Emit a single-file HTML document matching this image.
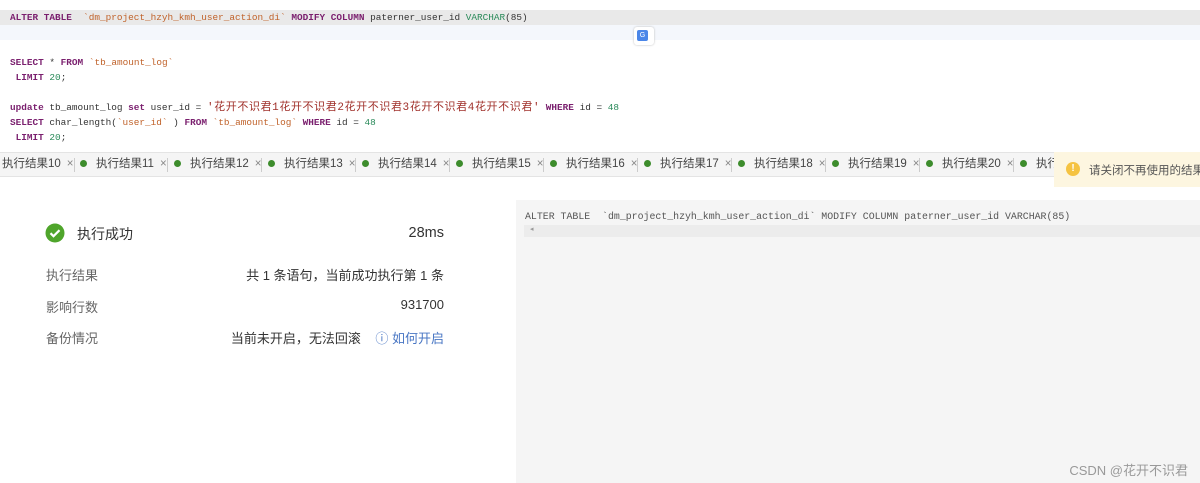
<!DOCTYPE html>
<html><head><meta charset="utf-8"><style>
body{margin:0;width:1200px;height:483px;background:#fff;position:relative;overflow:hidden;font-family:"Liberation Sans","Noto Sans CJK SC",sans-serif}
.code{position:absolute;left:0;top:0;width:1200px;height:150px}
.ln{position:absolute;left:10px;font-family:"Liberation Mono","Noto Sans CJK SC",monospace;font-size:9.4px;color:#333;white-space:pre;line-height:15px}
.k{color:#7a1f6e;font-weight:bold}.s{color:#c0622a}.n{color:#2a8a5a}.c{color:#a0302a;font-size:11px;letter-spacing:0.6px}
.tabs{position:absolute;left:0;top:152px;width:1200px;height:23px;background:#f5f5f5;border-top:1px solid #e4e4e4;border-bottom:1px solid #e4e4e4}
.tab{position:absolute;top:0;height:23px;line-height:23px;font-size:11.5px;color:#444;white-space:nowrap}
.dot{display:inline-block;width:7px;height:7px;border-radius:50%;background:#3d8c2c;margin-right:9px;vertical-align:0}
.x{color:#888;margin-left:6px}
.sep{position:absolute;top:5px;width:1px;height:14px;background:#ccc}
.warn{position:absolute;left:1054px;top:152px;width:146px;height:35px;background:#fdf6e0;font-size:11.5px;color:#555}
.right{position:absolute;left:516px;top:200px;width:684px;height:283px;background:#f5f5f5}
.lbl{position:absolute;left:46px;font-size:13px;color:#666}
.val{position:absolute;right:756px;font-size:13px;color:#333;white-space:nowrap}
</style></head><body>
<div class="code">
<div style="position:absolute;left:0;top:10px;width:1200px;height:15px;background:#e9e9e9"></div>
<div style="position:absolute;left:0;top:25px;width:1200px;height:15px;background:#f4f7fc"></div>
<div style="position:absolute;left:634px;top:27px;width:20px;height:18px;background:#fff;border-radius:3px;box-shadow:0 0 2px #bbb"><div style="position:absolute;left:3px;top:3px;width:11px;height:11px;background:#4a86e8;border-radius:2px;color:#fff;font-size:7px;line-height:11px;text-align:center">G</div></div>
<div class="ln" style="top:10px"><span class="k">ALTER TABLE</span>  <span class="s">`dm_project_hzyh_kmh_user_action_di`</span> <span class="k">MODIFY COLUMN</span> paterner_user_id <span class="n">VARCHAR</span>(85)</div>
<div class="ln" style="top:55px"><span class="k">SELECT</span> * <span class="k">FROM</span> <span class="s">`tb_amount_log`</span></div>
<div class="ln" style="top:70px"> <span class="k">LIMIT</span> <span class="n">20</span>;</div>
<div class="ln" style="top:100px"><span class="k">update</span> tb_amount_log <span class="k">set</span> user_id = <span class="c">'花开不识君1花开不识君2花开不识君3花开不识君4花开不识君'</span> <span class="k">WHERE</span> id = <span class="n">48</span></div>
<div class="ln" style="top:115px"><span class="k">SELECT</span> char_length(<span class="s">`user_id`</span> ) <span class="k">FROM</span> <span class="s">`tb_amount_log`</span> <span class="k">WHERE</span> id = <span class="n">48</span></div>
<div class="ln" style="top:130px"> <span class="k">LIMIT</span> <span class="n">20</span>;</div>
</div>
<div class="tabs">
<div class="tab" style="left:2px">执行结果10<span class="x">×</span></div>
<div class="sep" style="left:74px"></div>
<div class="tab" style="left:80px"><span class="dot"></span>执行结果11<span class="x">×</span></div>
<div class="sep" style="left:167px"></div>
<div class="tab" style="left:174px"><span class="dot"></span>执行结果12<span class="x">×</span></div>
<div class="sep" style="left:261px"></div>
<div class="tab" style="left:268px"><span class="dot"></span>执行结果13<span class="x">×</span></div>
<div class="sep" style="left:355px"></div>
<div class="tab" style="left:362px"><span class="dot"></span>执行结果14<span class="x">×</span></div>
<div class="sep" style="left:449px"></div>
<div class="tab" style="left:456px"><span class="dot"></span>执行结果15<span class="x">×</span></div>
<div class="sep" style="left:543px"></div>
<div class="tab" style="left:550px"><span class="dot"></span>执行结果16<span class="x">×</span></div>
<div class="sep" style="left:637px"></div>
<div class="tab" style="left:644px"><span class="dot"></span>执行结果17<span class="x">×</span></div>
<div class="sep" style="left:731px"></div>
<div class="tab" style="left:738px"><span class="dot"></span>执行结果18<span class="x">×</span></div>
<div class="sep" style="left:825px"></div>
<div class="tab" style="left:832px"><span class="dot"></span>执行结果19<span class="x">×</span></div>
<div class="sep" style="left:919px"></div>
<div class="tab" style="left:926px"><span class="dot"></span>执行结果20<span class="x">×</span></div>
<div class="sep" style="left:1013px"></div>
<div class="tab" style="left:1020px"><span class="dot"></span>执行</div>
</div>
<div class="warn"><div style="position:absolute;left:12px;top:10px;width:14px;height:14px;border-radius:50%;background:#f5c342;color:#fff;font-size:10px;font-weight:bold;text-align:center;line-height:14px">!</div><div style="position:absolute;left:35px;top:10px;white-space:nowrap">请关闭不再使用的结果集</div></div>
<svg style="position:absolute;left:45px;top:223px" width="20" height="20"><circle cx="10" cy="10" r="9.5" fill="#4fa52b"/><path d="M5.5 10.2l3 3 6-6" stroke="#fff" stroke-width="2.2" fill="none"/></svg>
<div style="position:absolute;left:77px;top:224px;font-size:14px;color:#333">执行成功</div>
<div class="val" style="top:225px;font-size:14.5px">28ms</div>
<div class="lbl" style="top:265px">执行结果</div><div class="val" style="top:265px">共 1 条语句，当前成功执行第 1 条</div>
<div class="lbl" style="top:297px">影响行数</div><div class="val" style="top:297px">931700</div>
<div class="lbl" style="top:328px">备份情况</div><div class="val" style="top:328px">当前未开启，无法回滚 &nbsp;&nbsp;&nbsp;<span style="color:#4a77c4">ⓘ 如何开启</span></div>
<div class="right">
<div style="position:absolute;left:9px;top:11px;font-family:'Liberation Mono',monospace;font-size:9.9px;color:#555;white-space:pre">ALTER TABLE  `dm_project_hzyh_kmh_user_action_di` MODIFY COLUMN paterner_user_id VARCHAR(85)</div>
<div style="position:absolute;left:8px;top:25px;width:676px;height:12px;background:#ececec"><span style="position:absolute;left:6px;top:0;font-size:7px;color:#999">◂</span></div>
<div style="position:absolute;right:12px;top:260px;font-size:13px;color:#999">CSDN @花开不识君</div>
</div>
</body></html>
